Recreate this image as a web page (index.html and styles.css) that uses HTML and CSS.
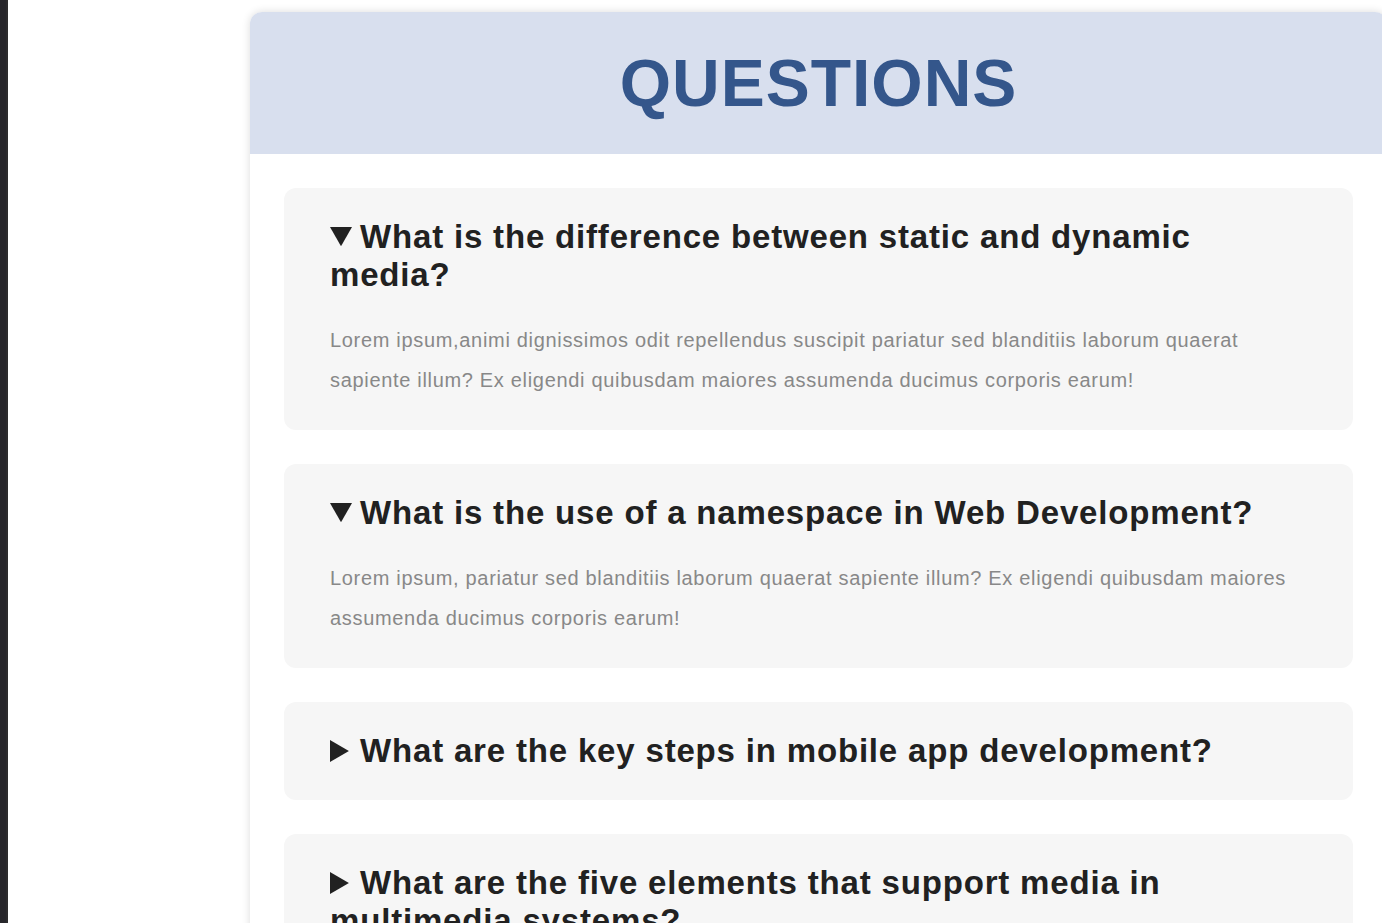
FILE: index.html
```html
<!DOCTYPE html>
<html lang="en">
<head>
<meta charset="utf-8">
<meta name="viewport" content="width=device-width, initial-scale=1">
<title>Questions</title>
<link rel="stylesheet" href="styles.css">
</head>
<body>
<div class="page">
  <aside class="rail"></aside>
  <main class="panel">
    <header class="panel-header"><h1 class="title">QUESTIONS</h1></header>
    <div class="list">
      <details class="item" open>
        <summary class="question">What is the difference between static and dynamic media?</summary>
        <p class="answer">Lorem ipsum,animi dignissimos odit repellendus suscipit pariatur sed blanditiis laborum quaerat sapiente illum? Ex eligendi quibusdam maiores assumenda ducimus corporis earum!</p>
      </details>
      <details class="item" open>
        <summary class="question">What is the use of a namespace in Web Development?</summary>
        <p class="answer">Lorem ipsum, pariatur sed blanditiis laborum quaerat sapiente illum? Ex eligendi quibusdam maiores assumenda ducimus corporis earum!</p>
      </details>
      <details class="item">
        <summary class="question">What are the key steps in mobile app development?</summary>
        <p class="answer">Lorem ipsum, pariatur sed blanditiis laborum quaerat sapiente illum?</p>
      </details>
      <details class="item">
        <summary class="question">What are the five elements that support media in multimedia systems?</summary>
        <p class="answer">Lorem ipsum, pariatur sed blanditiis laborum quaerat sapiente illum?</p>
      </details>
    </div>
  </main>
</div>
</body>
</html>
```
FILE: styles.css
```css
* { box-sizing: border-box; }

body {
  margin: 0;
  background: #fff;
  color: #212121;
  font-family: "Liberation Sans", Arial, sans-serif;
}

.page {
  display: flex;
  height: 100vh;
  overflow: hidden;
}

.rail {
  flex: none;
  width: 8px;
  background: #27262b;
  border-right: 2px solid #2d2c2e;
}

.panel {
  flex: 1;
  align-self: flex-start;
  margin: 12px -5px 0 242px;
  border-radius: 12px;
  background: #fff;
  box-shadow: 0 0 8px rgba(0, 0, 0, 0.14);
  overflow: hidden;
}

.panel-header {
  padding: 30px;
  background: #d8dfee;
  text-align: center;
}

.title {
  margin: 0;
  color: #34568b;
  font-size: 66px;
  line-height: 82px;
  letter-spacing: 1px;
}

.list {
  display: grid;
  gap: 34px;
  padding: 34px;
}

.item {
  padding: 30px 46px;
  border-radius: 12px;
  background: #f6f6f6;
}

.question {
  font-size: 33px;
  font-weight: 700;
  line-height: 38px;
  letter-spacing: 0.025em;
  list-style: none;
  cursor: pointer;
}

.question::-webkit-details-marker { display: none; }

.question::before {
  content: "";
  display: inline-block;
  width: 22px;
  height: 22px;
  margin-right: 8px;
  background: currentColor;
  clip-path: polygon(0 0, 86% 50%, 0 100%);
}

.item[open] > .question::before {
  clip-path: polygon(0 5%, 100% 5%, 50% 92%);
}

.answer {
  margin: 26px 0 0;
  color: #888;
  font-size: 20px;
  line-height: 40px;
  letter-spacing: 0.034em;
}
```
